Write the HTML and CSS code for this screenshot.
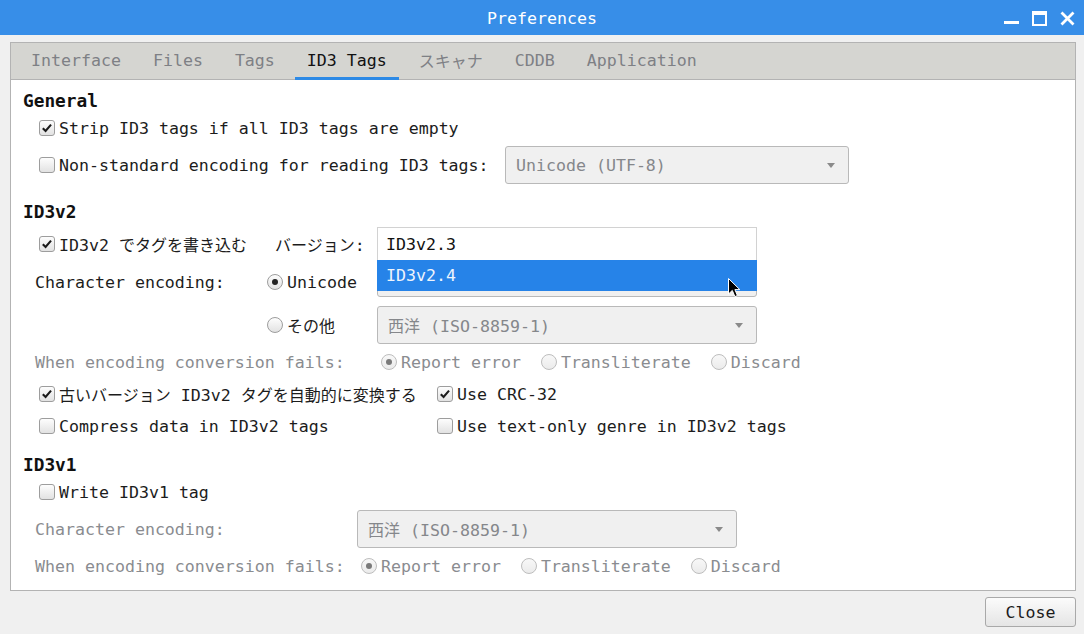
FILE: index.html
```html
<!DOCTYPE html>
<html lang="ja">
<head>
<meta charset="utf-8">
<title>Preferences</title>
<link rel="stylesheet" href="styles.css">
</head>
<body>
<div class="window">
  <header class="titlebar">
    <span class="title">Preferences</span>
    <div class="wbtns">
      <svg class="wb" width="15" height="15" viewBox="0 0 15 15"><rect x="0" y="10" width="15" height="3" fill="#fff"/></svg>
      <svg class="wb" width="15" height="15" viewBox="0 0 15 15"><rect x="1" y="1" width="13" height="13" fill="none" stroke="#fff" stroke-width="2"/><rect x="0" y="0" width="15" height="4" fill="#fff"/></svg>
      <svg class="wb" width="15" height="15" viewBox="0 0 15 15"><path d="M1.5 1.5 L13.5 13.5 M13.5 1.5 L1.5 13.5" stroke="#fff" stroke-width="2.8" fill="none"/></svg>
    </div>
  </header>
  <main class="body">
    <div class="tabwidget">
      <nav class="tabbar">
        <div class="tab">Interface</div>
        <div class="tab">Files</div>
        <div class="tab">Tags</div>
        <div class="tab active">ID3 Tags</div>
        <div class="tab"><span class="jp">スキャナ</span></div>
        <div class="tab">CDDB</div>
        <div class="tab">Application</div>
      </nav>
      <section class="page">
        <div class="h">General</div>
        <div class="row in-cb">
          <label class="item"><span class="cb"><svg viewBox="0 0 16 16"><path d="M3.2 8.2 L6.4 11.4 L12.6 4.2"/></svg></span>Strip ID3 tags if all ID3 tags are empty</label>
        </div>
        <div class="row r42 in-cb">
          <label class="item w466"><span class="cb"></span>Non-standard encoding for reading ID3 tags:</label>
          <div class="combo c344"><span>Unicode (UTF-8)</span><span class="arrow"></span></div>
        </div>

        <div class="h mt13">ID3v2</div>
        <div class="row mt5 in-cb">
          <label class="item w236"><span class="cb"><svg viewBox="0 0 16 16"><path d="M3.2 8.2 L6.4 11.4 L12.6 4.2"/></svg></span><span>ID3v2 <span class="jp">でタグを書き込む</span></span></label>
          <span class="w102"><span class="jp">バージョン</span>:</span>
        </div>
        <div class="row r44 in-lb">
          <span class="w232">Character encoding:</span>
          <label class="item w110"><span class="rb on"></span>Unicode</label>
          <div class="combo c380 up"><span></span><span class="arrow"></span></div>
        </div>
        <div class="row r42 in-lb">
          <span class="w232"></span>
          <label class="item w110"><span class="rb"></span><span class="jp">その他</span></label>
          <div class="combo c380"><span><span class="jp">西洋</span> (ISO-8859-1)</span><span class="arrow"></span></div>
        </div>
        <div class="row in-lb dis">
          <span class="w346">When encoding conversion fails:</span>
          <div class="radios">
            <label class="item"><span class="rb on"></span>Report error</label>
            <label class="item"><span class="rb"></span>Transliterate</label>
            <label class="item"><span class="rb"></span>Discard</label>
          </div>
        </div>
        <div class="row in-cb">
          <label class="item w398"><span class="cb"><svg viewBox="0 0 16 16"><path d="M3.2 8.2 L6.4 11.4 L12.6 4.2"/></svg></span><span><span class="jp">古いバージョン</span> ID3v2 <span class="jp">タグを自動的に変換する</span></span></label>
          <label class="item"><span class="cb"><svg viewBox="0 0 16 16"><path d="M3.2 8.2 L6.4 11.4 L12.6 4.2"/></svg></span>Use CRC-32</label>
        </div>
        <div class="row in-cb">
          <label class="item w398"><span class="cb"></span>Compress data in ID3v2 tags</label>
          <label class="item"><span class="cb"></span>Use text-only genre in ID3v2 tags</label>
        </div>

        <div class="h mt10">ID3v1</div>
        <div class="row in-cb">
          <label class="item"><span class="cb"></span>Write ID3v1 tag</label>
        </div>
        <div class="row r42 in-lb dis">
          <span class="w322">Character encoding:</span>
          <div class="combo c380"><span><span class="jp">西洋</span> (ISO-8859-1)</span><span class="arrow"></span></div>
        </div>
        <div class="row in-lb dis">
          <span class="w326">When encoding conversion fails:</span>
          <div class="radios">
            <label class="item"><span class="rb on"></span>Report error</label>
            <label class="item"><span class="rb"></span>Transliterate</label>
            <label class="item"><span class="rb"></span>Discard</label>
          </div>
        </div>

        <div class="popup">
          <div class="opt">ID3v2.3</div>
          <div class="opt sel">ID3v2.4</div>
        </div>
        <svg class="cursor" width="13" height="20" viewBox="0 0 13 20"><path d="M0.5 0.5 L0.5 16 L4.3 12.4 L6.9 18.6 L9.4 17.5 L6.9 11.6 L11.8 11.6 Z" fill="#000" stroke="#fff" stroke-width="1"/></svg>
      </section>
    </div>
    <footer class="footer">
      <button class="btn">Close</button>
    </footer>
  </main>
</div>
</body>
</html>
```

FILE: styles.css
```css
* { box-sizing: border-box; margin: 0; padding: 0; }
html, body { width: 1084px; height: 634px; overflow: hidden; }
body {
  font-family: "DejaVu Sans Mono", "Noto Sans CJK JP", monospace;
  font-size: 16.6px;
  color: #1c1c1c;
  background: #f0f0f0;
}
.jp { font-size: 16px; }
.window { display: flex; flex-direction: column; height: 634px; }

.titlebar {
  height: 35px;
  background: #378ee8;
  color: #fff;
  display: grid;
  grid-template-columns: 1fr auto 1fr;
  align-items: center;
}
.title { grid-column: 2; padding-top: 1px; }
.wbtns {
  grid-column: 3;
  justify-self: end;
  display: flex;
  align-items: center;
  gap: 13px;
  padding-right: 9px;
  padding-top: 2px;
}
.wb { display: block; }

.body { flex: 1; display: flex; flex-direction: column; padding: 7px 8px 0 10px; }
.tabwidget {
  height: 549px;
  border: 1px solid #b3b3b3;
  display: flex;
  flex-direction: column;
}
.tabbar {
  height: 37px;
  flex: none;
  background: #d5d5d1;
  border-bottom: 1px solid #b3b3b3;
  display: flex;
  padding-left: 4px;
}
.tab {
  position: relative;
  padding: 0 16px 2px;
  display: flex;
  align-items: center;
  color: #7e8085;
}
.tab.active { color: #111; }
.tab.active::after {
  content: "";
  position: absolute;
  left: 4px;
  right: 4px;
  bottom: -1px;
  height: 3px;
  background: #2d8ae6;
}

.page { flex: 1; background: #fff; position: relative; padding: 8px 0 0 12px; }
.h { height: 24px; display: flex; align-items: center; font-weight: bold; font-size: 17.8px; color: #111; }
.row { display: flex; align-items: center; height: 32px; white-space: nowrap; }
.r42 { height: 42px; }
.r44 { height: 44px; }
.mt13 { margin-top: 13px; }
.mt10 { margin-top: 10px; }
.mt5 { margin-top: 5px; }
.in-cb { padding-left: 16px; }
.in-lb { padding-left: 12px; }
.item { display: flex; align-items: center; gap: 4px; }
.radios { display: flex; align-items: center; gap: 20px; }
.dis { color: #8a8c90; }

.w466 { width: 466px; }
.w236 { width: 236px; }
.w102 { width: 102px; }
.w232 { width: 232px; flex: none; }
.w110 { width: 110px; }
.w346 { width: 346px; }
.w398 { width: 398px; }
.w322 { width: 322px; }
.w326 { width: 326px; }

.cb, .rb {
  width: 16px;
  height: 16px;
  flex: none;
  border: 1px solid #9d9d9d;
  background: linear-gradient(#fdfdfd, #e2e2e2);
  display: flex;
  align-items: center;
  justify-content: center;
}
.cb { border-radius: 3px; }
.cb svg { width: 16px; height: 16px; display: block; }
.cb svg path { fill: none; stroke: #1b1b1b; stroke-width: 2.4; }
.rb { border-radius: 50%; }
.rb.on::after { content: ""; width: 6px; height: 6px; border-radius: 50%; background: #222; }
.dis .rb { border-color: #bdbdbd; background: linear-gradient(#f8f8f8, #ebebeb); }
.dis .rb.on::after { background: #7a7a7a; }

.combo {
  height: 38px;
  flex: none;
  border: 1px solid #b9b9b9;
  border-radius: 3px;
  background: #f0f0f0;
  display: flex;
  align-items: center;
  justify-content: space-between;
  padding: 0 13px 0 10px;
  color: #85878b;
}
.combo.up { margin-bottom: 8px; }
.c344 { width: 344px; }
.c380 { width: 380px; }
.arrow {
  width: 0;
  height: 0;
  border-left: 4.5px solid transparent;
  border-right: 4.5px solid transparent;
  border-top: 5px solid #8a8a8a;
}

.popup {
  position: absolute;
  left: 366px;
  top: 147px;
  width: 380px;
  height: 64px;
  background: #fff;
  border: 1px solid #d2d2d2;
  border-bottom: none;
  display: flex;
  flex-direction: column;
}
.opt { height: 32px; display: flex; align-items: center; padding-left: 8px; color: #111; }
.opt.sel { height: 31px; background: #2683e8; color: #eef4fc; margin: 0 -1px; padding-left: 9px; }
.cursor { position: absolute; left: 717px; top: 198px; }

.footer { flex: 1; display: flex; justify-content: flex-end; align-items: flex-start; padding-top: 6px; }
.btn {
  width: 91px;
  height: 30px;
  border: 1px solid #a9a9a9;
  border-radius: 3px;
  background: linear-gradient(#fbfbfb, #e5e5e5);
  font: inherit;
  color: #1c1c1c;
}
```
